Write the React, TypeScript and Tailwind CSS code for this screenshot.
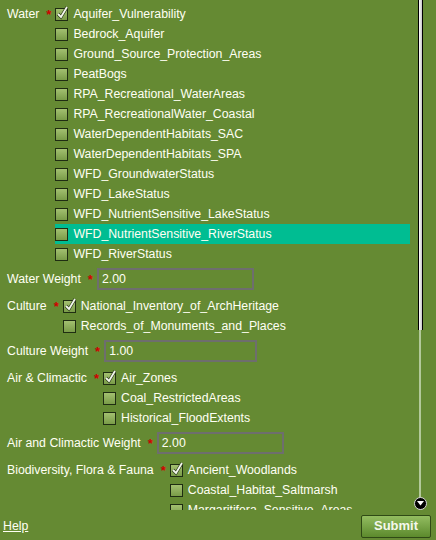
import React from "react";

type Group = {
  name: string;
  items: string[];
  checked: number[];
  weightLabel: string;
  weight: string;
  inputW: string;
};

const groups: Group[] = [
  {
    name: "Water",
    items: [
      "Aquifer_Vulnerability",
      "Bedrock_Aquifer",
      "Ground_Source_Protection_Areas",
      "PeatBogs",
      "RPA_Recreational_WaterAreas",
      "RPA_RecreationalWater_Coastal",
      "WaterDependentHabitats_SAC",
      "WaterDependentHabitats_SPA",
      "WFD_GroundwaterStatus",
      "WFD_LakeStatus",
      "WFD_NutrientSensitive_LakeStatus",
      "WFD_NutrientSensitive_RiverStatus",
      "WFD_RiverStatus",
    ],
    checked: [0],
    weightLabel: "Water Weight",
    weight: "2.00",
    inputW: "w-[157px]",
  },
  {
    name: "Culture",
    items: ["National_Inventory_of_ArchHeritage", "Records_of_Monuments_and_Places"],
    checked: [0],
    weightLabel: "Culture Weight",
    weight: "1.00",
    inputW: "w-[153px]",
  },
  {
    name: "Air & Climactic",
    items: ["Air_Zones", "Coal_RestrictedAreas", "Historical_FloodExtents"],
    checked: [0],
    weightLabel: "Air and Climactic Weight",
    weight: "2.00",
    inputW: "w-[127px]",
  },
  {
    name: "Biodiversity, Flora & Fauna",
    items: ["Ancient_Woodlands", "Coastal_Habitat_Saltmarsh", "Margaritifera_Sensitive_Areas"],
    checked: [0],
    weightLabel: "",
    weight: "",
    inputW: "",
  },
];

function Check({ on }: { on: boolean }) {
  return (
    <span className="relative mr-[5px] inline-block h-[13px] w-[13px] shrink-0 border border-[#1f2d12] bg-gradient-to-b from-[#a3c070] to-[#7a9c48]">
      {on && (
        <svg className="absolute -left-[1px] -top-[4px]" width="15" height="16" viewBox="0 0 15 16">
          <path d="M3 9 L6 12 L12 2" fill="none" stroke="#2a3a18" strokeWidth="3.2" />
          <path d="M3 9 L6 12 L12 2" fill="none" stroke="#f4f8ee" strokeWidth="1.8" />
        </svg>
      )}
    </span>
  );
}

const Star = () => (
  <span className="ml-[7px] mr-[4px] text-[13px] font-bold leading-none text-[#d00000]">*</span>
);

export default function App() {
  const highlight = "WFD_NutrientSensitive_RiverStatus";
  return (
    <div className="h-[540px] w-[436px] overflow-hidden bg-[#658a33] text-[12.3px] text-[#fffff4] [font-family:'Liberation_Sans',Arial,sans-serif]">
      <div className="flex h-[510px]">
        <div className="w-[417px] overflow-hidden pl-[7px] pr-[7px] pt-[4px]">
          {groups.map((g, gi) => (
            <div key={g.name} className={gi > 0 ? "mt-[6px]" : ""}>
              <div className="flex">
                <div className="flex h-[20px] shrink-0 items-center">
                  <span>{g.name}</span>
                  <Star />
                </div>
                <div className="flex-1">
                  {g.items.map((it, i) => (
                    <div
                      key={it}
                      className={`flex h-[20px] items-center ${it === highlight ? "bg-[#00bd92]" : ""}`}
                    >
                      <Check on={g.checked.includes(i)} />
                      <span className="whitespace-nowrap">{it}</span>
                    </div>
                  ))}
                </div>
              </div>
              {g.weightLabel && (
                <div className="mt-[4px] flex h-[22px] items-center">
                  <span>{g.weightLabel}</span>
                  <Star />
                  <div className={`flex h-[22px] items-center border-2 border-[#6e6e6e] px-[3px] ${g.inputW}`}>
                    {g.weight}
                  </div>
                </div>
              )}
            </div>
          ))}
        </div>
        <div className="relative flex w-[6px] flex-col items-center">
          <div className="h-[330px] w-[5px] border-x border-black bg-gradient-to-r from-white to-[#c8c8c8]" />
          <div className="w-[2px] flex-1 bg-[#b3c99a]" />
          <div className="absolute left-[-3px] top-[497px] flex h-[13px] w-[13px] items-center justify-center rounded-full border border-[#d8d8d8] bg-black">
            <svg width="7" height="5" viewBox="0 0 7 5">
              <path d="M0 0 H7 L3.5 4.5 Z" fill="white" />
            </svg>
          </div>
        </div>
      </div>
      <div className="flex h-[30px] items-center justify-between pl-[3px] pr-[5px]">
        <a href="#" className="mt-[2px] underline">Help</a>
        <button className="mt-[2px] h-[23px] w-[70px] rounded-[2px] border border-[#2f4a15] bg-gradient-to-b from-[#93bd60] to-[#5c8a2c] text-[13px] font-bold text-[#f4f8ec]">
          Submit
        </button>
      </div>
    </div>
  );
}
